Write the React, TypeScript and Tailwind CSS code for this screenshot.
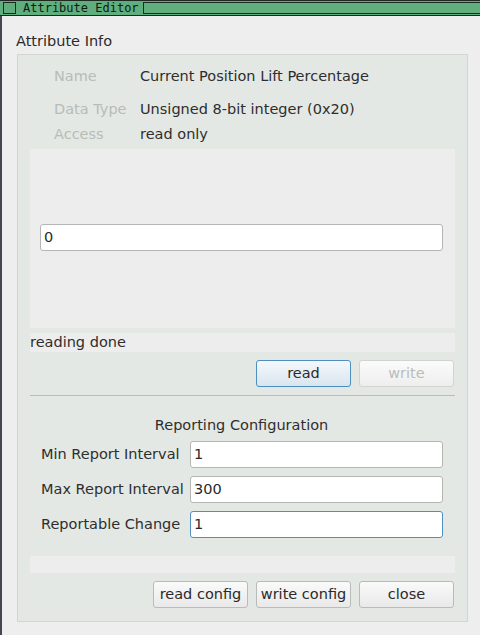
import React from "react";

const font = { fontFamily: '"DejaVu Sans", "Liberation Sans", sans-serif' };

function Btn({ children, variant = "normal" }: { children: React.ReactNode; variant?: "normal" | "default" | "disabled" }) {
  const cls =
    variant === "default"
      ? "border-[#4f8fbf] bg-gradient-to-b from-[#f4f8fb] to-[#d9e5ef] text-[#2a2a2a]"
      : variant === "disabled"
      ? "border-[#d2d4d2] bg-gradient-to-b from-[#fbfbfb] to-[#eeeeee] text-[#b9bdb9]"
      : "border-[#b9bbb9] bg-gradient-to-b from-[#fafafa] to-[#e9e9e9] text-[#2a2a2a]";
  return (
    <div className={`w-[95px] h-[27px] rounded-[3px] border flex items-center justify-center text-[14.5px] ${cls}`}>
      {children}
    </div>
  );
}

function Input({ value, focus = false, w }: { value: string; focus?: boolean; w: string }) {
  return (
    <div
      className={`${w} h-[27px] rounded-[3px] border bg-white flex items-center pl-[3px] text-[14.5px] text-[#2a2a2a] ${
        focus ? "border-[#4f8fbf]" : "border-[#b4b6b4]"
      }`}
    >
      {value}
    </div>
  );
}

export default function App() {
  return (
    <div className="w-[480px] h-[635px] bg-[#eeeeee] overflow-hidden flex flex-col" style={font}>
      {/* title bar */}
      <div className="h-[16px] bg-[#60ad7d] border-y border-[#1d2a22] flex items-center shrink-0">
        <div className="ml-[3px] w-[13px] h-[12px] border border-[#1d2a22] bg-[#60ad7d]" />
        <div className="ml-[7px] text-[12px] leading-[14px] text-[#0f1a12]" style={{ fontFamily: '"DejaVu Sans Mono", monospace' }}>
          Attribute Editor
        </div>
        <div className="ml-[4px] flex-1 h-[12px] border border-[#1d2a22] border-r-0 bg-[#60ad7d]" />
      </div>
      {/* body */}
      <div className="flex-1 border-l-2 border-[#4a4450] flex flex-col">
        <div className="ml-[14px] mt-[17px] h-[17px] flex items-center text-[14.5px] text-[#2a2a2a]">Attribute Info</div>
        <div className="ml-[15px] mt-[4px] w-[451px] h-[568px] border border-[#d2d6d2] bg-[#e4e8e4] flex flex-col">
          {/* info rows */}
          <div className="mt-[12px] h-[20px] flex items-center text-[14.5px]">
            <span className="ml-[36px] w-[86px] text-[#b7bcb7]">Name</span>
            <span className="text-[#2e2e2e]">Current Position Lift Percentage</span>
          </div>
          <div className="mt-[13px] h-[20px] flex items-center text-[14.5px]">
            <span className="ml-[36px] w-[86px] text-[#b7bcb7]">Data Type</span>
            <span className="text-[#2e2e2e]">Unsigned 8-bit integer (0x20)</span>
          </div>
          <div className="mt-[5px] h-[20px] flex items-center text-[14.5px]">
            <span className="ml-[36px] w-[86px] text-[#b7bcb7]">Access</span>
            <span className="text-[#2e2e2e]">read only</span>
          </div>
          {/* value area */}
          <div className="mx-[12px] mt-[4px] h-[179px] bg-[#ededed] flex flex-col">
            <div className="ml-[10px] mt-[75px]">
              <Input value="0" w="w-[403px]" />
            </div>
          </div>
          <div className="mx-[12px] mt-[5px] h-[19px] bg-[#ededed] flex items-center text-[14.5px] text-[#2e2e2e]">
            reading done
          </div>
          <div className="mx-[12px] mt-[8px] flex justify-end gap-[8px] pr-[1px]">
            <Btn variant="default">read</Btn>
            <Btn variant="disabled">write</Btn>
          </div>
          <div className="mx-[12px] mt-[8px] h-[1px] bg-[#b9bcb9]" />
          <div className="mt-[20px] h-[20px] flex items-center justify-center text-[14.5px] text-[#2e2e2e] pr-[2px]">
            Reporting Configuration
          </div>
          <div className="mt-[5px] flex flex-col gap-[8px]">
            <div className="flex items-center h-[27px]">
              <span className="ml-[23px] w-[149px] text-[14.5px] text-[#2e2e2e]">Min Report Interval</span>
              <Input value="1" w="w-[253px]" />
            </div>
            <div className="flex items-center h-[27px]">
              <span className="ml-[23px] w-[149px] text-[14.5px] text-[#2e2e2e]">Max Report Interval</span>
              <Input value="300" w="w-[253px]" />
            </div>
            <div className="flex items-center h-[27px]">
              <span className="ml-[23px] w-[149px] text-[14.5px] text-[#2e2e2e]">Reportable Change</span>
              <Input value="1" focus w="w-[253px]" />
            </div>
          </div>
          <div className="mx-[12px] mt-[18px] h-[17px] bg-[#ededed]" />
          <div className="mx-[12px] mt-[8px] flex justify-end gap-[8px] pr-[1px]">
            <Btn>read config</Btn>
            <Btn>write config</Btn>
            <Btn>close</Btn>
          </div>
        </div>
      </div>
    </div>
  );
}
